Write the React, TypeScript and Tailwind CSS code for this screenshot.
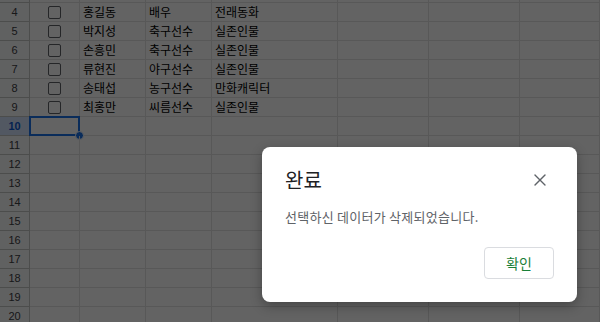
import { X } from "lucide-react";

const ROWS: { n: number; check: boolean; name?: string; job?: string; type?: string }[] = [
  { n: 3, check: true },
  { n: 4, check: true, name: "홍길동", job: "배우", type: "전래동화" },
  { n: 5, check: true, name: "박지성", job: "축구선수", type: "실존인물" },
  { n: 6, check: true, name: "손흥민", job: "축구선수", type: "실존인물" },
  { n: 7, check: true, name: "류현진", job: "야구선수", type: "실존인물" },
  { n: 8, check: true, name: "송태섭", job: "농구선수", type: "만화캐릭터" },
  { n: 9, check: true, name: "최홍만", job: "씨름선수", type: "실존인물" },
  ...Array.from({ length: 11 }, (_, i) => ({ n: 10 + i, check: false })),
];

const cell = "h-[19px] border-r border-b border-[#e2e3e3] flex items-center px-[3px] truncate";

function Sheet() {
  return (
    <div className="-mt-[16px] grid grid-cols-[30px_50px_66px_66px_126px_91px_91px_1fr] text-[12px] text-black font-['Noto_Sans_CJK_KR',sans-serif]">
      {ROWS.map((r) => {
        const active = r.n === 10;
        return (
          <div key={r.n} className="contents">
            <div
              className={`h-[19px] border-r border-b border-[#c4c7c5] flex items-center justify-center font-['Liberation_Sans',sans-serif] text-[11px] ${
                active ? "bg-[#d3e3fd] font-bold text-[#0b57d0]" : "bg-[#f8f9fa] text-[#3c4043]"
              }`}
            >
              {r.n > 3 ? r.n : ""}
            </div>
            <div className={`${cell} justify-center relative overflow-visible`}>
              {r.check && <div className="w-[13px] h-[13px] border-[1.5px] border-[#5f6368] rounded-[2px]" />}
              {active && (
                <>
                  <div className="absolute -left-px -top-px -right-px -bottom-px border-2 border-[#1a73e8]" />
                  <div className="absolute -right-[5px] -bottom-[5px] w-[9px] h-[9px] rounded-full bg-[#1a73e8] border border-white" />
                </>
              )}
            </div>
            <div className={cell}>{r.name}</div>
            <div className={cell}>{r.job}</div>
            <div className={cell}>{r.type}</div>
            <div className={cell} />
            <div className={cell} />
            <div className={cell} />
          </div>
        );
      })}
    </div>
  );
}

export default function App() {
  return (
    <div className="relative w-[600px] h-[322px] overflow-hidden bg-white">
      <Sheet />
      <div className="absolute inset-0 bg-black/[0.61]" />
      <div className="absolute left-[262px] top-[147px] w-[315px] h-[155px] rounded-[8px] bg-white shadow-[0_4px_12px_rgba(0,0,0,0.3)] flex flex-col px-[23px] pt-[20px] pb-[23px] font-['Noto_Sans_CJK_KR',sans-serif]">
        <div className="flex items-center justify-between">
          <h2 className="text-[20px] leading-[26px] text-[#202124]">완료</h2>
          <X className="w-[20px] h-[20px] text-[#5f6368] mr-[4px]" strokeWidth={1.6} />
        </div>
        <p className="mt-[15px] text-[13px] leading-[18px] tracking-[0.02em] text-[#5f6368]">선택하신 데이터가 삭제되었습니다.</p>
        <div className="mt-auto flex justify-end">
          <button className="w-[70px] h-[32px] rounded-[4px] border border-[#dadce0] text-[14px] text-[#188038]">확인</button>
        </div>
      </div>
    </div>
  );
}
